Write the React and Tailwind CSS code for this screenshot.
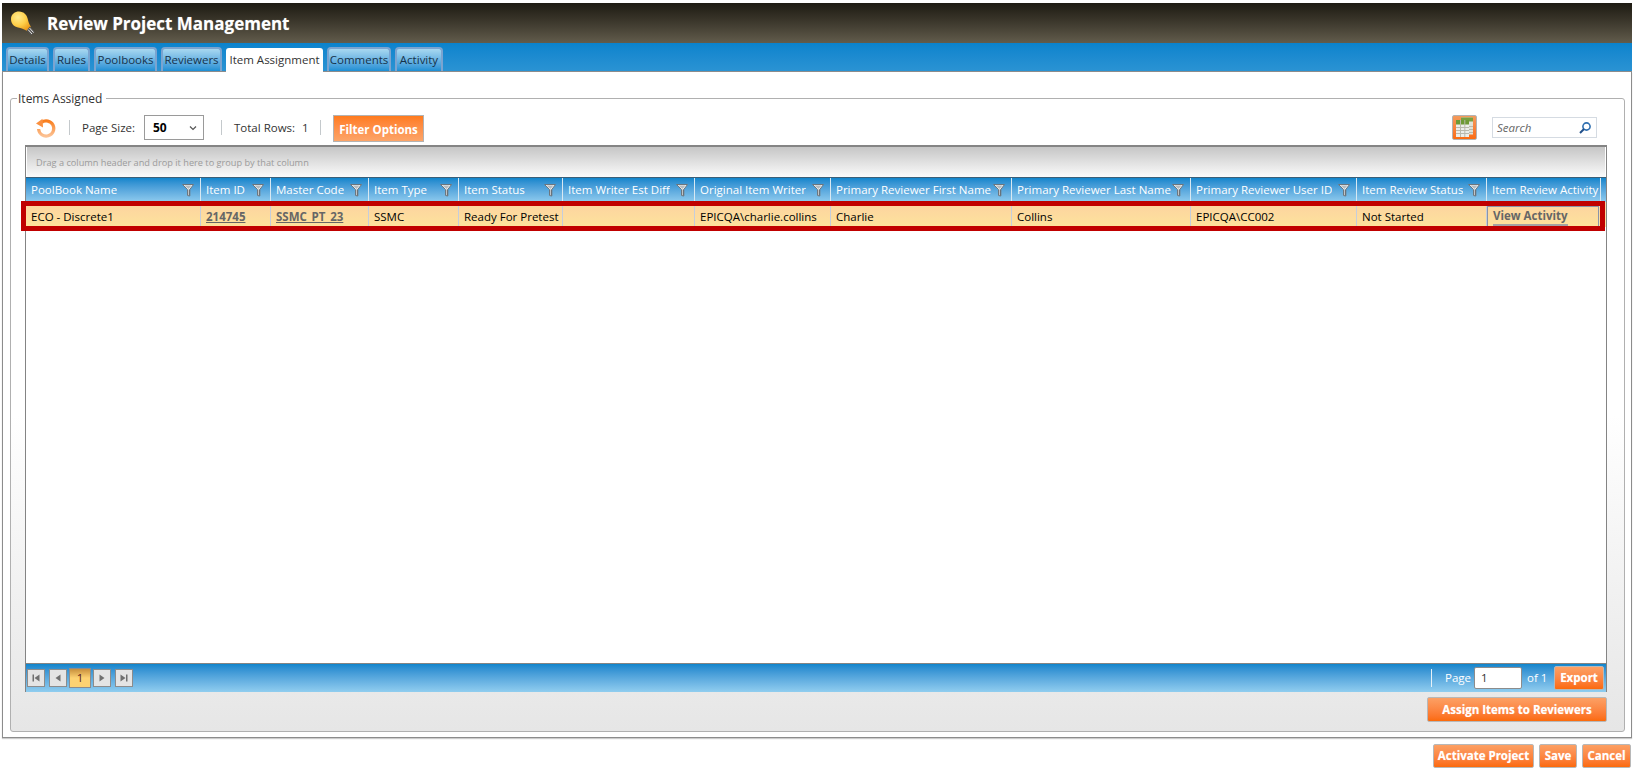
const FONT = "font-['Open_Sans','Noto_Sans',sans-serif]";
const TABS = [["Details", 43], ["Rules", 37], ["Poolbooks", 63], ["Reviewers", 61], ["Item Assignment", 97], ["Comments", 64], ["Activity", 48]];
const COLS = [
  ["PoolBook Name", 175], ["Item ID", 70], ["Master Code", 98], ["Item Type", 90], ["Item Status", 104],
  ["Item Writer Est Diff", 132], ["Original Item Writer", 136], ["Primary Reviewer First Name", 181],
  ["Primary Reviewer Last Name", 179], ["Primary Reviewer User ID", 166], ["Item Review Status", 130], ["Item Review Activity", 114, true],
];
const ROW = [
  ["ECO - Discrete1"],
  ["214745", "link"],
  ["SSMC_PT_23", "link"],
  ["SSMC"],
  ["Ready For Pretest"],
  [""],
  ["EPICQA\\charlie.collins"],
  ["Charlie"],
  ["Collins"],
  ["EPICQA\\CC002"],
  ["Not Started"],
  ["View Activity", "view"],
];
const ORANGE = "bg-gradient-to-b from-[#fca064] to-[#fb6a08] text-white font-bold border border-[#b8b8b8] rounded-[2px] [text-shadow:0_0_1px_rgba(255,255,255,0.5)]";

function Funnel() {
  return (
    <svg width="12" height="14" viewBox="0 0 12 14" className="shrink-0">
      <path d="M0.5 1.5 H11.5 L7.8 6.5 V13 L5.5 12.5 V6.5 Z" fill="#eef1f2" stroke="#6c767e" strokeWidth="1" strokeLinejoin="round" />
      <path d="M2.5 2.5 H9.5 L6.5 6 Z" fill="#b4bbc0" />
      <path d="M7.2 6.5 V12.5" stroke="#59636b" strokeWidth="1" />
    </svg>
  );
}
function Bulb() {
  return (
    <svg width="26" height="25" viewBox="0 0 26 25" className="shrink-0">
      <defs>
        <radialGradient id="bulbg" cx="0.35" cy="0.3" r="0.75">
          <stop offset="0" stopColor="#ffeb8f" />
          <stop offset="0.55" stopColor="#ffcf48" />
          <stop offset="1" stopColor="#eb9a1a" />
        </radialGradient>
      </defs>
      <path d="M1 8 C1 3 5 0.5 9 0.5 C14 0.5 17 4 18 9 C18.5 12 20 14 21 16 L17 20 C14 18 11 17 8 16.5 C4 15.5 1 13 1 8 Z" fill="url(#bulbg)" />
      <path d="M20 15.5 L25 21 L21 24.5 L16.5 19.5 Z" fill="#55534f" />
      <path d="M19.5 17 L23.5 21.5 M18 18.5 L22 23" stroke="#e8e8e8" strokeWidth="1" />
    </svg>
  );
}
function Refresh() {
  return (
    <svg width="22" height="22" viewBox="0 0 22 22" className="shrink-0">
      <defs>
        <linearGradient id="refg" x1="0" y1="0" x2="0" y2="1">
          <stop offset="0" stopColor="#f97e1e" />
          <stop offset="1" stopColor="#fcc294" />
        </linearGradient>
      </defs>
      <path d="M6.5 5.5 A7.6 7.6 0 1 1 3.6 12" fill="none" stroke="url(#refg)" strokeWidth="3.2" />
      <path d="M1 6.5 L7.5 1.8 L8 10.5 Z" fill="#fa9040" />
    </svg>
  );
}
function Sheet() {
  return (
    <div className="w-[25px] h-[25px] rounded-[2px] border border-[#b3b3b3] bg-gradient-to-b from-[#f49a5a] to-[#fb6c0e] flex items-center justify-center">
      <svg width="19" height="21" viewBox="0 0 19 21">
        <rect x="6" y="0.5" width="12" height="17" fill="#dfe3d8" />
        <rect x="6" y="0.5" width="12" height="4" fill="#78a040" />
        <rect x="1" y="3" width="13" height="17" fill="#eceeea" />
        <rect x="1" y="3" width="13" height="4.5" fill="#6d9a35" />
        <path d="M1 10.5 H14 M1 13.5 H14 M1 16.5 H14 M5.5 3 V20 M9.8 3 V20" stroke="#b9b9ad" strokeWidth="1" />
        <path d="M14 9.5 H18 M14 12.5 H18 M14 15.5 H18" stroke="#b9b9ad" strokeWidth="1" />
      </svg>
    </div>
  );
}
function Pager({ d }) {
  return (
    <div className="w-[18px] h-[18px] border border-[#8c8c8c] bg-[#e4e4e4] flex items-center justify-center">
      <svg width="10" height="10" viewBox="0 0 10 10"><path d={d} fill="#707070" /></svg>
    </div>
  );
}
function Sep() {
  return <div className="w-px h-[15px] bg-[#c4c9cc]" />;
}

export default function App() {
  return (
    <div className={`${FONT} w-[1636px] h-[774px] bg-white pt-[3px] pl-[2px] pr-[4px] text-[11.5px] text-black overflow-hidden flex flex-col`}>
      <div className="h-[40px] bg-gradient-to-b from-[#1e1b13] to-[#625c4c] flex items-center pl-[8px] gap-[11px] shrink-0">
        <Bulb />
        <span className="pt-[2px] text-white font-bold text-[17px] [text-shadow:0_0_1px_rgba(255,255,255,0.4)]">Review Project Management</span>
      </div>
      <div className="h-[29px] bg-gradient-to-b from-[#0a83cd] to-[#2a93d3] border-b border-[#8c8c8c] flex items-end pl-[4px] gap-[4px] shrink-0">
        {TABS.map(([t, w]) => {
          const active = t === "Item Assignment";
          return (
            <div
              key={t}
              style={{ width: w }}
              className={active
                ? "h-[24px] -mb-px whitespace-nowrap flex items-center justify-center bg-white rounded-t-[3px] text-[#333]"
                : "h-[24px] whitespace-nowrap flex items-center justify-center rounded-t-[4px] border-2 border-b-0 border-[#7ba4d0] bg-gradient-to-b from-[#a8d8f0] to-[#1a8fd4] text-[#16324a]"}
            >
              {t}
            </div>
          );
        })}
      </div>
      <div className="h-[666px] border border-[#8c8c8c] border-t-0 pl-[7px] pr-[6px] pb-[5px] shadow-[0_1px_1px_#ccc] flex flex-col shrink-0">
        <div className="relative mt-[26px] flex-1 border border-[#b0b0b0] rounded-[3px] bg-gradient-to-b from-white via-white to-[#e6e6e6] flex flex-col pl-[14px] pr-[17px]">
          <span className="absolute left-[6px] -top-[9px] bg-white pl-[1px] pr-[4px] text-[12px] leading-[17px] text-[#333]">Items Assigned</span>
          <div className="h-[46px] pt-[11px] flex items-center shrink-0 text-[#333]">
            <div className="ml-[10px]"><Refresh /></div>
            <div className="ml-[12px]"><Sep /></div>
            <span className="ml-[12px] w-[62px] whitespace-nowrap">Page Size:</span>
            <div className="w-[60px] h-[25px] border border-[#9a9a9a] bg-white flex items-center justify-between pl-[8px] pr-[6px] text-[12px] font-bold text-black">
              <span>50</span>
              <svg width="8" height="6" viewBox="0 0 8 6"><path d="M1 1.5 L4 4.5 L7 1.5" fill="none" stroke="#555" strokeWidth="1.2" /></svg>
            </div>
            <div className="ml-[17px]"><Sep /></div>
            <span className="ml-[12px] w-[68px] whitespace-nowrap">Total Rows:</span>
            <span className="w-[18px]">1</span>
            <Sep />
            <div className="ml-[12px] mt-[2px] pt-[2px] w-[91px] h-[27px] flex items-center justify-center bg-gradient-to-b from-[#ff7b1c] to-[#fca468] text-white font-bold border border-[#b3b3b3]">Filter Options</div>
            <div className="ml-auto"><Sheet /></div>
            <div className="ml-[15px] mr-[10px] w-[105px] h-[21px] border border-[#d5dbe2] bg-white flex items-center justify-between pl-[4px] pr-[4px]">
              <span className="italic text-[#666]">Search</span>
              <svg width="14" height="14" viewBox="0 0 14 14"><circle cx="8.5" cy="5.5" r="3.6" fill="none" stroke="#2f6fb0" strokeWidth="1.6" /><path d="M6 8 L2 12" stroke="#1f4f8a" strokeWidth="2" /></svg>
            </div>
          </div>
          <div className="flex-1 border-x border-t-2 border-[#848484] bg-white flex flex-col min-h-0">
            <div className="h-[30px] mx-px pt-[1px] shrink-0 bg-gradient-to-b from-[#c6c6c6] to-[#fbfbfb] flex items-center pl-[9px] text-[9.2px] text-[#9b9b9b]">
              Drag a column header and drop it here to group by that column
            </div>
            <div className="h-[25px] shrink-0 bg-gradient-to-b from-[#0d85cc] to-[#8fcbee] flex border-t border-[#3b5f78]">
              {COLS.map(([name, w, last]) => (
                <div key={name} style={{ width: w }} className={`shrink-0 border-r border-[#d8e8f2] flex items-center justify-between pl-[5px] text-white ${last ? "" : "pr-[6px] overflow-hidden"}`}>
                  <span className={`whitespace-nowrap ${last ? "" : "overflow-hidden"}`}>{name}</span>
                  {!last && <Funnel />}
                </div>
              ))}
            </div>
            <div className="relative h-[25px] shrink-0 bg-gradient-to-b from-[#fdd2a0] to-[#fde39c] flex">
              <div className="absolute -left-[5px] right-px -top-[1px] -bottom-[4px] border-[5px] border-[#c00000] pointer-events-none" />
              {ROW.map(([v, k], i) =>
                k === "view" ? (
                  <div key={i} style={{ width: COLS[i][1] }} className="shrink-0 pt-[4px] flex">
                    <div className="w-[112px] border border-[#8a94a8] pl-[5px] flex items-stretch font-bold text-[#666] whitespace-nowrap">
                      <span className="flex items-center border-b-2 border-[#a3a3a3]">{v}</span>
                    </div>
                  </div>
                ) : (
                  <div
                    key={i}
                    style={{ width: COLS[i][1] }}
                    className={`shrink-0 pt-[4px] flex items-center pl-[5px] whitespace-nowrap overflow-hidden border-r border-[#c5cddc] ${k === "link" ? "font-bold text-[#666] underline" : ""}`}
                  >
                    {v}
                  </div>
                )
              )}
            </div>
            <div className="flex-1" />
            <div className="h-[29px] shrink-0 border-t border-[#848484] bg-gradient-to-b from-[#0d85cc] to-[#90cdef] flex items-center pl-[1px] pr-[2px] text-white">
              <Pager d="M1.5 1.5 H3 V8.5 H1.5 Z M8.5 1.5 V8.5 L3.5 5 Z" />
              <div className="w-[4px]" />
              <Pager d="M7.5 1.5 V8.5 L2.5 5 Z" />
              <div className="ml-[2px] w-[22px] h-[20px] border border-[#8c8c8c] bg-gradient-to-b from-[#c78f3c] via-[#fdd272] to-[#fdd272] flex items-center justify-center text-[#5a1a1a]">1</div>
              <div className="w-[2px]" />
              <Pager d="M2.5 1.5 V8.5 L7.5 5 Z" />
              <div className="w-[4px]" />
              <Pager d="M8.5 1.5 H7 V8.5 H8.5 Z M1.5 1.5 V8.5 L6.5 5 Z" />
              <div className="ml-auto w-px h-[18px] bg-[#e6f1f8]" />
              <span className="ml-[13px] w-[29px]">Page</span>
              <div className="w-[48px] h-[22px] border border-[#8c8c8c] bg-white text-[#333] flex items-center pl-[6px] rounded-[2px]">1</div>
              <span className="ml-[5px] w-[27px] whitespace-nowrap">of 1</span>
              <div className={`w-[50px] h-[24px] flex items-center justify-center ${ORANGE}`}>Export</div>
            </div>
          </div>
          <div className="h-[39px] shrink-0 flex items-start justify-end pt-[5px]">
            <div className={`w-[180px] h-[25px] flex items-center justify-center ${ORANGE}`}>Assign Items to Reviewers</div>
          </div>
        </div>
      </div>
      <div className="flex justify-end gap-[5px] mt-[6px] mr-px shrink-0">
        <div className={`w-[101px] h-[24px] flex items-center justify-center ${ORANGE}`}>Activate Project</div>
        <div className={`w-[38px] h-[24px] flex items-center justify-center ${ORANGE}`}>Save</div>
        <div className={`w-[49px] h-[24px] flex items-center justify-center ${ORANGE}`}>Cancel</div>
      </div>
    </div>
  );
}
